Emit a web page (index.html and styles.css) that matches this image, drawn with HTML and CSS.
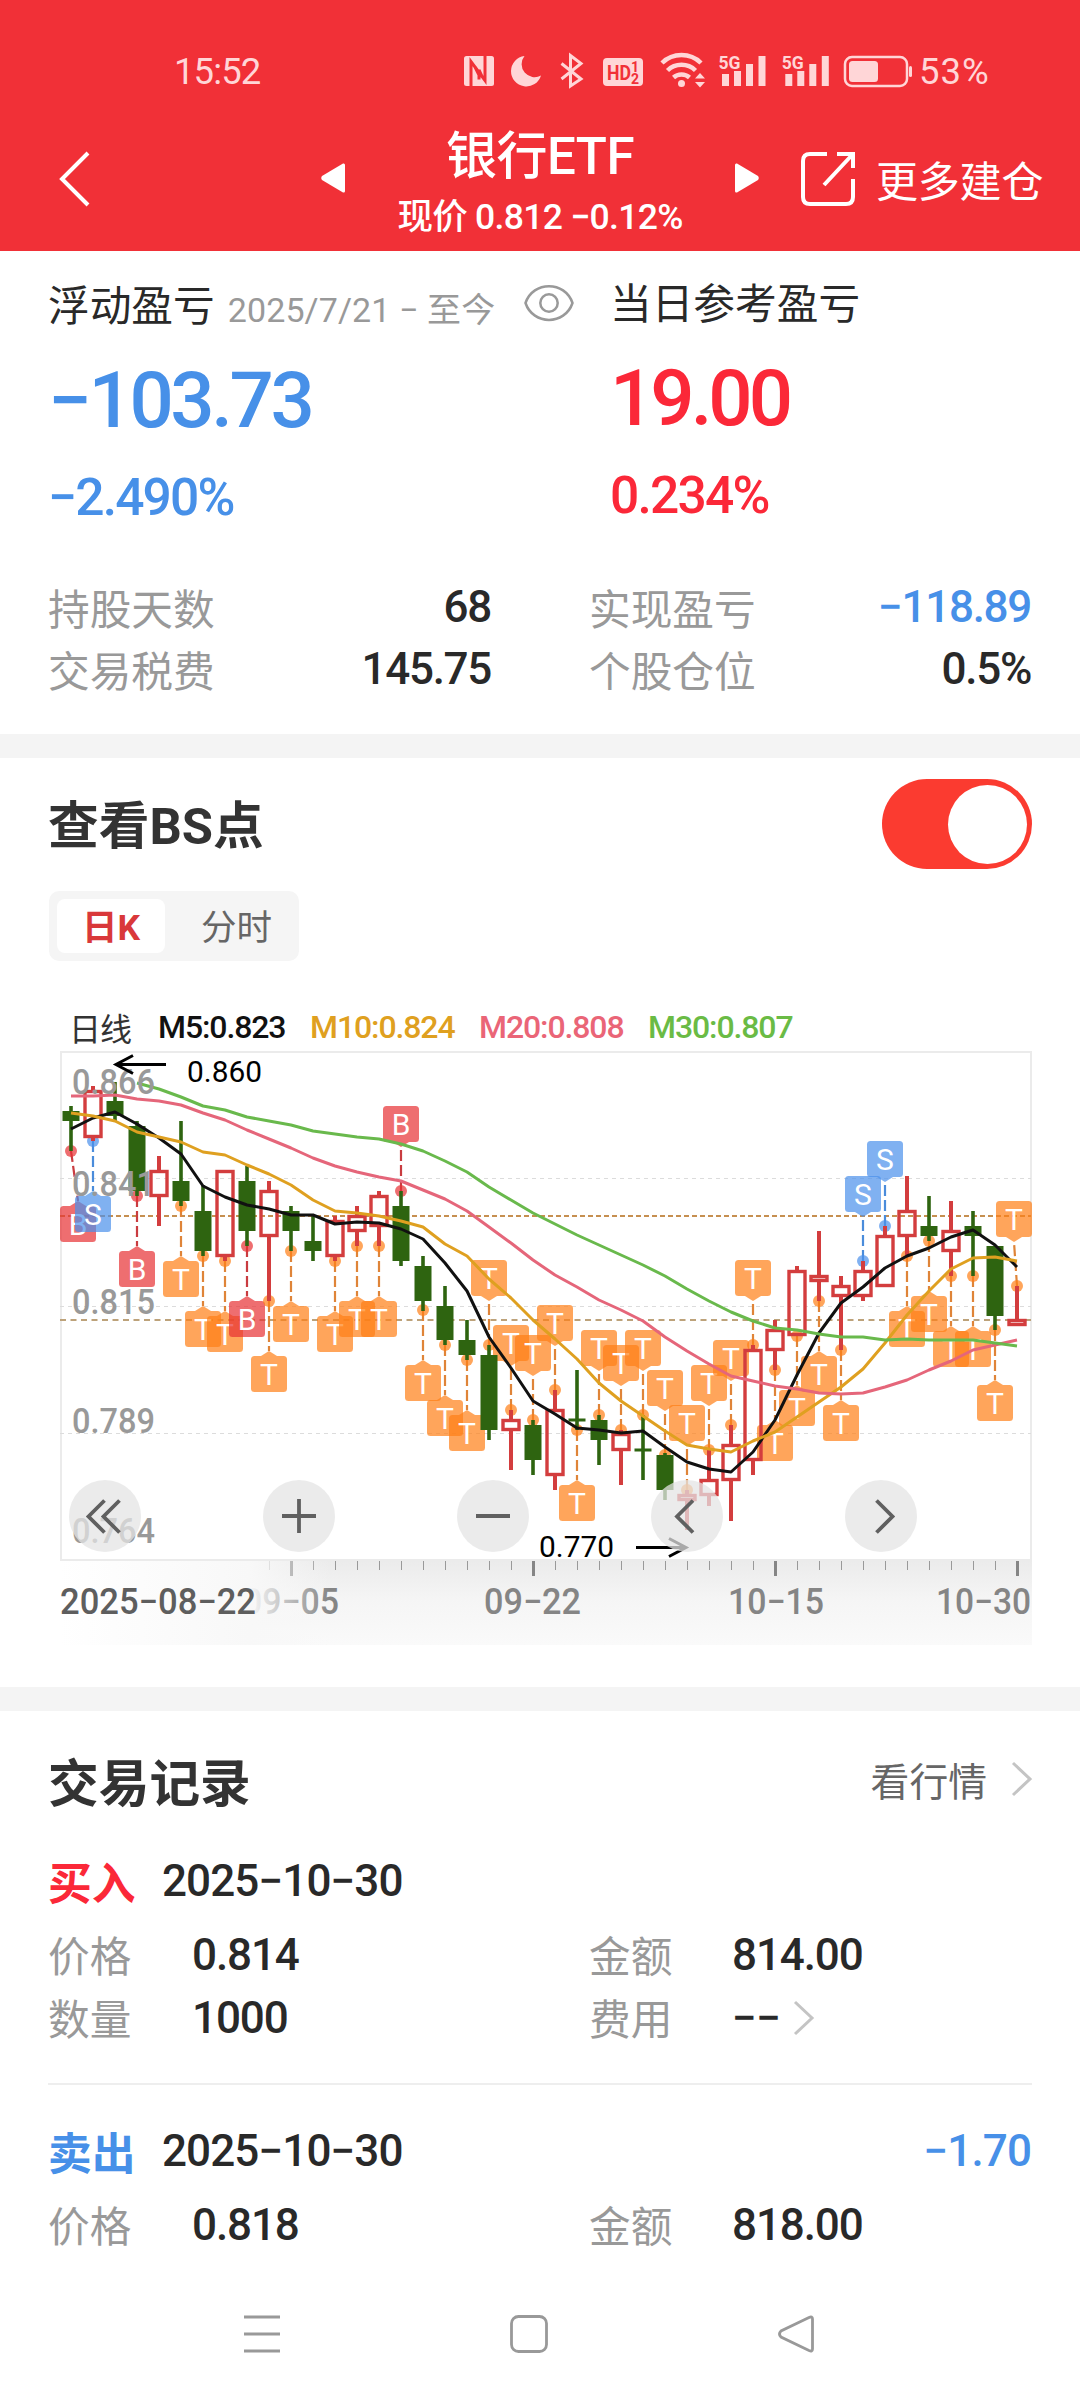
FILE: index.html
```html
<!DOCTYPE html>
<html lang="zh-CN">
<head>
<meta charset="utf-8">
<title>银行ETF</title>
<link rel="stylesheet" href="styles.css">
</head>
<body>
<header class="top">
  <div class="status">
    <span class="clock">15:52</span>
    <svg class="status-icons" width="448" height="40" viewBox="464 51 448 40">
      <rect x="464" y="56" width="30" height="30" rx="2.5"/>
      <path class="cut" d="M471 86V61.500L482 76.500L479 70V79.500M485 56V80.500L475 67L479 75"/>
      <path d="M524.500 56A15.300 15.300 0 1 0 541 75.500A13 13 0 0 1 524.500 56Z"/>
      <path class="line" d="M561.500 63.500L581 79L570.500 86V55.500L581 63.500L561.500 79"/>
      <rect x="603" y="58" width="40" height="28" rx="4"/>
      <text class="cut-text" x="607" y="80" font-size="21" textLength="24" lengthAdjust="spacingAndGlyphs">HD</text>
      <text class="cut-text" x="631" y="72" font-size="14">1</text>
      <text class="cut-text" x="631" y="84" font-size="14">2</text>
      <path class="arc" d="M662 63A28 28 0 0 1 701 63M667.500 70.500A20 20 0 0 1 695.500 70.500M673.500 77.500A12 12 0 0 1 689.500 77.500"/>
      <circle cx="681.500" cy="83.500" r="3.500"/>
      <path d="M695 78.500L700 73L705 78.500ZM695 82L700 87.500L705 82Z"/>
      <g id="signal">
        <text x="718.500" y="69" font-size="19" textLength="22" lengthAdjust="spacingAndGlyphs">5G</text>
        <path d="M722 74h7v12h-7zM734 71h7v15h-7zM746 64h7v22h-7zM758.500 56h7v30h-7z"/>
      </g>
      <use href="#signal" x="63.300"/>
      <rect class="cell" x="845" y="57" width="62" height="29" rx="7"/>
      <rect x="849" y="61" width="29" height="21" rx="3.500"/>
      <rect x="909" y="66" width="3" height="11" rx="1.500"/>
    </svg>
    <span class="battery">53%</span>
  </div>
  <nav class="bar">
    <svg class="back" width="34" height="60" viewBox="0 0 34 60"><path d="M30 4L4 30L30 56"/></svg>
    <svg class="prev" width="24" height="30" viewBox="0 0 24 30"><path d="M22 0.500Q24 0 24 2V28Q24 30 22 29.500L1 17Q-0.500 15 1 13Z"/></svg>
    <div class="heading">
      <h1>银行ETF</h1>
      <p>现价 0.812 −0.12%</p>
    </div>
    <svg class="next" width="24" height="30" viewBox="0 0 24 30"><path d="M2 0.500Q0 0 0 2V28Q0 30 2 29.500L23 17Q24.500 15 23 13Z"/></svg>
    <svg class="share" width="54" height="54" viewBox="0 0 54 54"><path d="M26 2H9Q2 2 2 9V45Q2 52 9 52H45Q52 52 52 45V27M36 2H52V16M51 3L23 33"/></svg>
    <span class="more">更多建仓</span>
  </nav>
</header>

<section class="summary">
  <div class="pnl">
    <div class="pnl-col">
      <div class="pnl-label">浮动盈亏 <span class="range">2025/7/21 − 至今</span>
        <svg class="eye" width="50" height="38" viewBox="0 0 50 38"><path d="M1.500 19C9 -3.500 41 -3.500 48.500 19C41 41.500 9 41.500 1.500 19Z"/><circle cx="25" cy="19" r="8.700"/></svg>
      </div>
      <div class="pnl-value down">−103.73</div>
      <div class="pnl-rate down">−2.490%</div>
    </div>
    <div class="pnl-col right">
      <div class="pnl-label">当日参考盈亏</div>
      <div class="pnl-value up">19.00</div>
      <div class="pnl-rate up">0.234%</div>
    </div>
  </div>
  <dl class="stats">
    <div><dt>持股天数</dt><dd>68</dd></div>
    <div><dt>实现盈亏</dt><dd class="down">−118.89</dd></div>
    <div><dt>交易税费</dt><dd>145.75</dd></div>
    <div><dt>个股仓位</dt><dd>0.5%</dd></div>
  </dl>
</section>

<section class="chart-panel">
  <div class="panel-head">
    <h2>查看BS点</h2>
    <span class="toggle"><i></i></span>
  </div>
  <div class="tabs"><span class="tab active">日K</span><span class="tab">分时</span></div>
  <div class="legend">
    <span class="name">日线</span><span class="m5">M5:0.823</span><span class="m10">M10:0.824</span><span class="m20">M20:0.808</span><span class="m30">M30:0.807</span>
  </div>
  <svg id="chart" class="chart" width="1080" height="613" viewBox="0 1047 1080 613"></svg>
</section>

<section class="trades">
  <div class="trades-head">
    <h2>交易记录</h2>
    <span class="quote">看行情</span>
    <svg class="chev" width="22" height="36" viewBox="0 0 22 36"><path d="M2 2L19 18L2 34"/></svg>
  </div>
  <article class="trade">
    <div class="trade-title"><b class="up">买入</b><span>2025−10−30</span></div>
    <div class="trade-row"><label>价格</label><span>0.814</span><label>金额</label><span>814.00</span></div>
    <div class="trade-row"><label>数量</label><span>1000</span><label>费用</label><span class="fee">−−<svg class="chev" width="22" height="36" viewBox="0 0 22 36"><path d="M2 2L19 18L2 34"/></svg></span></div>
  </article>
  <article class="trade">
    <div class="trade-title"><b class="down">卖出</b><span>2025−10−30</span><em class="down">−1.70</em></div>
    <div class="trade-row"><label>价格</label><span>0.818</span><label>金额</label><span>818.00</span></div>
  </article>
</section>

<footer class="sysnav">
  <svg width="36" height="38" viewBox="0 0 36 38"><path d="M0 2H36M0 19H36M0 36H36"/></svg>
  <svg width="38" height="38" viewBox="0 0 38 38"><rect x="1.500" y="1.500" width="35" height="35" rx="7"/></svg>
  <svg width="36" height="38" viewBox="0 0 36 38"><path d="M31 2.500Q34.500 1 34.500 4V34Q34.500 37 31 35.500L3 22Q0 19 3 16Z"/></svg>
</footer>
<script src="chart.js"></script>
</body>
</html>
```
FILE: styles.css
```css
* { box-sizing: border-box; }
body {
  margin: 0;
  width: 1080px;
  height: 2400px;
  overflow: hidden;
  background: #fff;
  color: #292929;
  font-family: Roboto, "Noto Sans CJK SC", sans-serif;
}
h1, h2, p, dl, dd { margin: 0; }
svg { display: block; flex: none; }
.up { color: #fb2838; }
.down { color: #4790e8; }

.top { height: 251px; background: #f13037; color: #fff; }
.status {
  display: flex;
  align-items: center;
  height: 102px;
  padding: 40px 0 0 174px;
  color: #ffd6d7;
  font-size: 36.500px;
}
.clock { width: 290px; letter-spacing: -0.9px; }
.status-icons { fill: #ffd6d7; }
.status-icons .cut { fill: none; stroke: #f13037; stroke-width: 3; }
.status-icons text { font-weight: 700; }
.status-icons .cut-text { fill: #f13037; }
.status-icons .line { fill: none; stroke: #ffd6d7; stroke-width: 3; }
.status-icons .arc { fill: none; stroke: #ffd6d7; stroke-width: 4.5; }
.status-icons .cell { fill: none; stroke: #ffd6d7; stroke-width: 2.5; }
.battery { margin-left: 7px; letter-spacing: 1px; }
.bar { display: flex; align-items: center; height: 149px; padding: 0 0 0 58px; }
.back { fill: none; stroke: #fff; stroke-width: 4; margin-top: 4px; }
.prev { fill: #fff; margin: 3px 0 0 229px; }
.next { fill: #fff; margin-top: 3px; }
.heading { width: 390px; padding-top: 14px; text-align: center; }
.heading h1 { font-size: 51px; font-weight: 500; line-height: 66px; letter-spacing: -0.5px; }
.heading p { font-size: 35.500px; font-weight: 500; line-height: 54px; letter-spacing: -0.7px; }
.share { fill: none; stroke: #fff; stroke-width: 4; margin: 5px 0 0 42px; }
.more { margin: 4px 0 0 21px; font-size: 42px; line-height: 60px; letter-spacing: -0.2px; font-family: "Noto Sans CJK SC", sans-serif; }

.summary { height: 507px; border-bottom: 24px solid #f4f4f4; padding: 0 49px 0 48px; }
.pnl { display: flex; height: 325px; }
.pnl-col { flex: none; width: 562px; padding-top: 21px; }
.pnl-col.right { width: 420px; padding-top: 19px; }
.pnl-label {
  display: flex;
  align-items: center;
  height: 60px;
  padding-top: 1px;
  font-family: "Noto Sans CJK SC", sans-serif;
  font-size: 41.700px;
  white-space: nowrap;
}
.range { margin: 9px 0 0 13px; font: 34px Roboto, "Noto Sans CJK SC", sans-serif; color: #999; letter-spacing: 0.1px; }
.eye { fill: none; stroke: #999; stroke-width: 2.5; margin-left: auto; margin-right: 36px; }
.pnl-value { margin-top: 29px; height: 80px; line-height: 80px; font-size: 78px; font-weight: 500; letter-spacing: -3.4px; }
.pnl-col.right .pnl-value { letter-spacing: -4px; }
.pnl-rate { margin-top: 27px; height: 60px; line-height: 60px; font-size: 51.500px; font-weight: 500; letter-spacing: -1.8px; }
.stats { display: grid; grid-template-columns: 443px 442px; column-gap: 98px; }
.stats div { display: flex; justify-content: space-between; align-items: center; height: 62px; }
.stats dt { font: 41.700px/62px "Noto Sans CJK SC", sans-serif; color: #999; }
.stats dd { font-size: 44px; font-weight: 500; letter-spacing: -1.3px; }

.chart-panel { height: 953px; padding-top: 21px; border-bottom: 24px solid #f4f4f4; }
.panel-head { display: flex; justify-content: space-between; align-items: center; height: 90px; padding: 0 48px; }
h2 { padding-top: 6px; font-size: 50.700px; font-weight: 700; color: #333; line-height: 60px; }
.toggle { display: flex; justify-content: flex-end; align-items: center; width: 150px; height: 90px; padding-right: 5px; border-radius: 45px; background: #fb3b30; }
.toggle i { width: 79px; height: 79px; border-radius: 50%; background: #fff; }
.tabs { display: flex; width: 250px; height: 70px; margin: 22px 0 0 49px; padding: 8px; border-radius: 10px; background: #f5f5f5; }
.tab { flex: 1; text-align: center; font-size: 35.500px; line-height: 59px; color: #666; padding-left: 17px; }
.tab.active { flex: 0 0 108px; padding: 0; border-radius: 8px; background: #fff; color: #d9383a; font-weight: 700; line-height: 58px; height: 54px; }
.legend {
  display: grid;
  grid-template-columns: 89px 152px 169px 169px 150px;
  align-items: center;
  height: 40px;
  margin-top: 43px;
  margin-bottom: 3px;
  padding-left: 69px;
  font-size: 32px;
  font-weight: 500;
  letter-spacing: -1.1px;
}
.legend .name { font-weight: 400; color: #333; }
.m5 { color: #111; }
.m10 { color: #dfa020; }
.m20 { color: #ea6577; }
.m30 { color: #6abb45; }

.chart text { font-family: Roboto, sans-serif; }
.frame { fill: none; stroke: #ebebeb; stroke-width: 2; }
.grid { stroke: #dcdcdc; stroke-width: 1; stroke-dasharray: 4 4; }
.cost { stroke: #c68f50; stroke-width: 2; stroke-dasharray: 5 3; }
.now { stroke: #bda27a; stroke-width: 2; stroke-dasharray: 6 4.5; }
.k-up { fill: none; stroke: #d33d3e; stroke-width: 3.4; }
.w-up { stroke: #d33d3e; stroke-width: 4; }
.k-down { fill: #2e6410; }
.w-down { stroke: #2e6410; stroke-width: 3.6; }
.ma { fill: none; stroke-width: 3; stroke-linejoin: round; }
.ma-5 { stroke: #111; }
.ma-10 { stroke: #dfa020; }
.ma-20 { stroke: #e5667a; }
.ma-30 { stroke: #69b94c; }
.lead { stroke-width: 2.2; stroke-dasharray: 11 4; }
.mark-T { fill: rgba(255, 127, 22, .7); stroke: #df8438; }
.mark-B { fill: rgba(231, 48, 51, .7); stroke: #c93c40; }
.mark-S { fill: rgba(74, 144, 235, .7); stroke: #4a8cdb; }
.mark-T .pin, .mark-B .pin, .mark-S .pin { stroke: none; }
.mark-text { fill: #fff; stroke: none; font-size: 30px; text-anchor: middle; }
.price { fill: #999; font-size: 35.500px; font-weight: 500; }
.extreme { fill: #000; font-size: 30px; }
.pointer { fill: none; stroke: #000; stroke-width: 3; }
.date { fill: #858585; font-size: 36px; font-weight: 500; }
.date.start { fill: #5e5e5e; }
.tick { stroke: #999; stroke-width: 1; }
.tick.major { stroke: #858585; stroke-width: 3; }
.knob { fill: rgba(228, 228, 228, .74); }
.glyph { fill: none; stroke: #606060; stroke-width: 3.8; }

.trades { padding: 38px 48px 0; }
.trades-head { display: flex; align-items: center; height: 66px; }
.quote { margin-left: auto; margin-top: -6px; font: 38.800px/60px "Noto Sans CJK SC", sans-serif; color: #666; }
.chev { fill: none; stroke: #c4c4c4; stroke-width: 3; }
.trades-head .chev { margin: -6px -1px 0 24px; }
.trade { padding-top: 34px; }
.trade + .trade { margin-top: 34px; border-top: 2px solid #eee; padding-top: 34px; }
.trade-title { display: flex; align-items: center; height: 64px; font-size: 44px; font-weight: 500; letter-spacing: -0.9px; }
.trade-title b { width: 114px; font: 700 43.800px/64px "Noto Sans CJK SC", sans-serif; letter-spacing: 0; }
.trade-title em { margin-left: auto; margin-right: 1px; font-style: normal; }
.trade-row { display: grid; grid-template-columns: 144px 397px 143px 1fr; align-items: center; height: 63px; font-size: 44px; font-weight: 500; letter-spacing: -1.1px; }
.trade-title + .trade-row { margin-top: 10px; }
.trade-row label { font: 41.700px/63px "Noto Sans CJK SC", sans-serif; letter-spacing: 0; color: #999; }
.trade-row .fee { display: flex; align-items: center; gap: 12px; letter-spacing: -0.5px; }

.sysnav { display: flex; width: 570px; justify-content: space-between; margin: 59px 0 0 244px; }
.sysnav svg { fill: none; stroke: #999; stroke-width: 2.8; }
```
FILE: chart.js
```js
const parts = [];
const add = (s) => parts.push(s);
const X = (i) => 71 + 22 * i;

// direction (u/d), high, body top, body bottom, low
const candles = [
  ['d',1106,1111,1121,1151],['u',1086,1090,1138,1141],['d',1082,1101,1116,1121],['d',1121,1126,1191,1196],
  ['u',1156,1170,1197,1226],['d',1121,1181,1201,1206],['d',1185,1211,1251,1256],['u',1170,1170,1257,1261],
  ['d',1166,1181,1231,1246],['u',1181,1190,1237,1301],['d',1206,1211,1231,1251],['d',1216,1241,1251,1261],
  ['u',1216,1220,1257,1261],['u',1206,1215,1232,1246],['u',1191,1195,1227,1246],['d',1191,1206,1261,1266],
  ['d',1256,1266,1301,1311],['d',1286,1306,1340,1345],['d',1320,1340,1355,1360],['d',1345,1355,1430,1440],
  ['u',1410,1419,1431,1470],['d',1420,1425,1460,1475],['u',1390,1409,1476,1490],['d',1370,1418.5,1421.5,1430],
  ['d',1415,1420,1440,1465],['u',1430,1433,1451,1485],['d',1415,1448.5,1451.5,1480],['d',1453,1455,1490,1500],
  ['u',1490,1494,1501,1530],['u',1450,1479,1496,1506],['u',1425,1444,1481,1521],['u',1345,1349,1461,1475],
  ['u',1320,1329,1351,1370],['u',1266,1270,1336,1336],['u',1231,1275,1282,1301],['u',1276,1285,1297,1350],
  ['u',1261,1270,1297,1301],['u',1226,1235,1287,1287],['u',1176,1210,1237,1256],['d',1196,1226,1236,1241],
  ['u',1201,1230,1252,1276],['d',1211,1226,1236,1276],['d',1246,1246,1316,1330],['u',1286,1319,1326,1326]
];

// candle index, kind, anchor y, label top
const marks = [
  [0,'B',1151,1206],[1,'S',1141,1196],[3,'B',1196,1251],[5,'T',1206,1261],[6,'T',1256,1311],[7,'T',1261,1316],
  [8,'B',1246,1301],[9,'T',1301,1356],[10,'T',1251,1306],[12,'T',1261,1316],[13,'T',1246,1301],[14,'T',1246,1301],
  [15,'B',1191,1106],[16,'T',1310,1365],[17,'T',1345,1400],[18,'T',1360,1415],[19,'T',1345,1260],[20,'T',1410,1325],
  [21,'T',1420,1335],[22,'T',1390,1305],[23,'T',1430,1485],[24,'T',1415,1330],[25,'T',1430,1345],[26,'T',1415,1330],
  [27,'T',1455,1370],[28,'T',1490,1405],[29,'T',1450,1365],[30,'T',1425,1340],[31,'T',1345,1260],[32,'T',1370,1425],
  [33,'T',1336,1390],[34,'T',1301,1356],[35,'T',1350,1405],[36,'S',1261,1176],[37,'S',1226,1141],[38,'T',1256,1311],
  [39,'T',1241,1296],[40,'T',1276,1331],[41,'T',1276,1331],[42,'T',1330,1385],[43,'T',1286,1201]
];

const averages = {
  20: [0, [1096,1096,1095,1099,1101,1105,1113,1120,1130,1139,1148,1158,1166,1172,1177,1181,1190,1199,1211,1227,1243,1260,1275,1287,1300,1310,1321,1337,1351,1364,1376,1381,1386,1389,1393,1394,1393,1387,1380,1370,1361,1350,1345,1340]],
  30: [3, [1083,1089,1097,1106,1110,1117,1121,1125,1131,1134,1137,1139,1144,1151,1161,1172,1187,1200,1213,1224,1235,1245,1255,1265,1276,1289,1301,1312,1321,1328,1330,1334,1337,1337,1340,1339,1340,1340,1340,1343,1346]],
  5: [0, [1129,1118,1112,1124,1138,1154,1186,1197,1205,1209,1215,1215,1224,1222,1223,1229,1239,1263,1291,1337,1368,1401,1414,1428,1430,1433,1431,1447,1462,1469,1472,1452,1420,1375,1333,1303,1287,1268,1256,1248,1237,1230,1245,1267]],
  10: [0, [1113,1116,1121,1132,1137,1142,1152,1155,1165,1174,1185,1200,1211,1213,1216,1221,1227,1244,1256,1279,1298,1320,1339,1359,1383,1401,1416,1431,1445,1449,1452,1441,1432,1417,1402,1387,1369,1343,1315,1291,1269,1258,1257,1261]]
};

const label = (cls, x, y, w, t) =>
  add(`<text class="${cls}" x="${x}" y="${y}" textLength="${w}" lengthAdjust="spacingAndGlyphs">${t}</text>`);

// date axis
add(`<defs>
  <linearGradient id="band" x2="0" y2="1"><stop offset="0" stop-color="#ebebeb"/><stop offset=".45" stop-color="#f5f5f5"/><stop offset="1" stop-color="#fafafa"/></linearGradient>
  <linearGradient id="fade"><stop offset="0" stop-color="#fff"/><stop offset=".7" stop-color="#f8f8f8"/><stop offset=".8" stop-color="#f8f8f8" stop-opacity=".65"/><stop offset="1" stop-color="#f8f8f8" stop-opacity="0"/></linearGradient>
</defs><rect x="60" y="1561" width="972" height="84" fill="url(#band)"/>`);
for (let i = 9; i < 44; i++) {
  const major = [10, 21, 32, 43].includes(i);
  const x = X(i) + 0.5;
  add(`<path class="tick${major ? ' major' : ''}" d="M${x} 1561V${major ? 1576 : 1570}"/>`);
}
label('date', 243, 1614, 96, '09−05');
label('date', 484, 1614, 97, '09−22');
label('date', 728, 1614, 96, '10−15');
label('date', 936, 1614, 95, '10−30');
add('<rect x="60" y="1561" width="270" height="84" fill="url(#fade)"/>');
label('date start', 60, 1614, 196, '2025−08−22');

// frame and guides
add('<rect class="frame" x="61" y="1052" width="970" height="508"/>');
[1178.5, 1306.5, 1433.5].forEach((y) => add(`<path class="grid" d="M60 ${y}H1031"/>`));
add('<path class="cost" d="M60 1216H1031"/><path class="now" d="M60 1320H1031"/>');

// trade marks
marks.forEach(([i, kind, y, top]) => {
  const x = X(i);
  const left = Math.min(Math.max(x - 18, 60), 996);
  const cx = left + 18;
  const below = top > y;
  const edge = below ? top : top + 36;
  const tip = below ? edge - 5 : edge + 5;
  add(`<g class="mark-${kind}"><path class="lead" d="M${x} ${y}L${cx} ${tip}"/>
    <circle class="pin" cx="${x}" cy="${y}" r="6"/>
    <rect class="pin" x="${left}" y="${top}" width="36" height="36" rx="3.5"/>
    <path class="pin" d="M${cx - 8} ${edge}L${cx} ${tip}L${cx + 8} ${edge}Z"/>
    <text class="mark-text" x="${cx}" y="${top + 28.5}">${kind}</text></g>`);
});

// candles
candles.forEach(([dir, high, top, bottom, low], i) => {
  const x = X(i);
  if (dir === 'u') {
    add(`<path class="w-up" d="M${x} ${high}V${top}M${x} ${bottom}V${low}"/>`);
    add(`<rect class="k-up" x="${x - 8}" y="${top + 1.5}" width="16" height="${bottom - top - 3}"/>`);
  } else {
    add(`<path class="w-down" d="M${x} ${high}V${low}"/>`);
    add(`<rect class="k-down" x="${x - 8.5}" y="${top}" width="17" height="${bottom - top}"/>`);
  }
});

Object.entries(averages).forEach(([n, [start, ys]]) =>
  add(`<polyline class="ma ma-${n}" points="${ys.map((y, k) => `${X(start + k)},${y}`).join(' ')}"/>`));

[['0.866', 1094], ['0.841', 1196], ['0.815', 1314], ['0.789', 1433], ['0.764', 1543]]
  .forEach(([t, y]) => label('price', 72, y, 83, t));

label('extreme', 187, 1082, 75, '0.860');
label('extreme', 539, 1557, 75, '0.770');
add('<path class="pointer" d="M166 1064.500H116M133 1055.500L116 1064.500L133 1073.500"/>');
add('<path class="pointer" d="M636 1547.500H686M669 1538.500L686 1547.500L669 1556.500"/>');

// controls
[105, 299, 493, 687, 881].forEach((x) => add(`<circle class="knob" cx="${x}" cy="1516" r="36"/>`));
add('<path class="glyph" d="M104.500 1500.500L88.500 1516.500L104.500 1532.500M119.500 1500.500L103.500 1516.500L119.500 1532.500M282 1516H316M299 1499V1533M476 1516H510M693 1500.500L677 1516.500L693 1532.500M876.500 1500.500L892.500 1516.500L876.500 1532.500"/>');

document.getElementById('chart').innerHTML = parts.join('');
```
